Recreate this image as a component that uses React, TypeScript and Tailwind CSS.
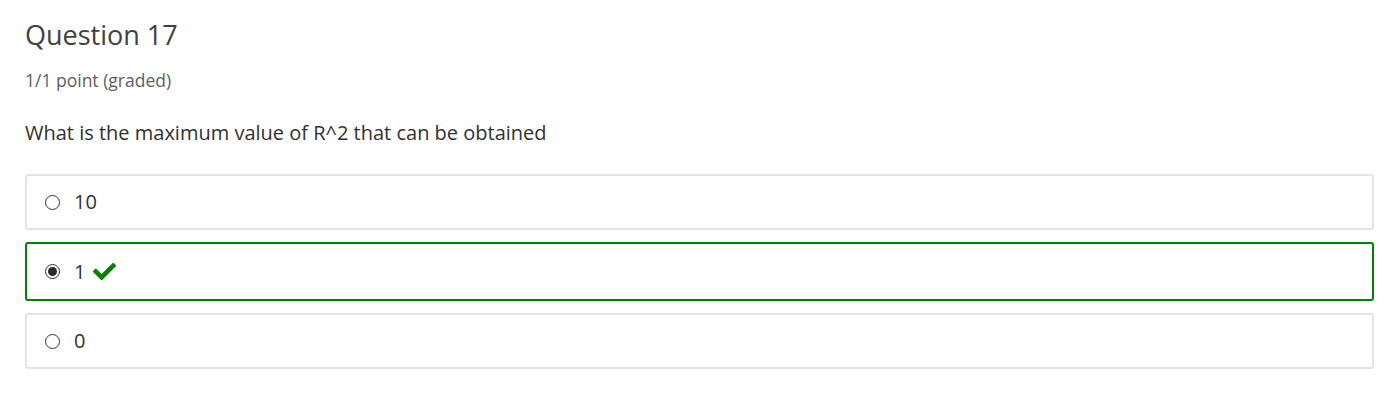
import React from 'react';
import { FaCheck } from 'react-icons/fa';

const choices = [
  { label: '10', selected: false, correct: false },
  { label: '1', selected: true, correct: true },
  { label: '0', selected: false, correct: false },
];

const Radio = ({ checked }: { checked: boolean }) => (
  <span className="flex items-center justify-center w-[15px] h-[15px] rounded-full border border-[#333] bg-white shrink-0">
    {checked && <span className="w-[9px] h-[9px] rounded-full bg-[#2b2b2b]" />}
  </span>
);

export default function App() {
  return (
    <div className="min-h-[420px] bg-white px-[25px] pt-[17px] text-[#333] font-['Open_Sans',sans-serif]">
      <h3 className="text-[27px] leading-[36px] text-[#414141]">Question 17</h3>
      <div className="mt-[15px] text-[17.5px] leading-[24px] text-[#5e5e5e]">1/1 point (graded)</div>

      <p className="mt-[27px] text-[20px] leading-[28px] text-[#313131]">
        What is the maximum value of R^2 that can be obtained
      </p>

      {/* Choices */}
      <div className="mt-[27px] mr-[-1px] flex flex-col gap-[12px]">
        {choices.map((c) => (
          <label
            key={c.label}
            className={
              c.correct
                ? 'flex items-center h-[59px] pl-[18px] border-2 border-[#008100] rounded-[3px]'
                : 'flex items-center h-[56px] pl-[18px] border-2 border-[#e4e4e4] rounded-[3px]'
            }
          >
            <Radio checked={c.selected} />
            <span className="ml-[14px] text-[20px] text-[#313131]">{c.label}</span>
            {c.correct && <FaCheck className="ml-[8px] text-[#008100]" size={23} />}
          </label>
        ))}
      </div>
    </div>
  );
}
